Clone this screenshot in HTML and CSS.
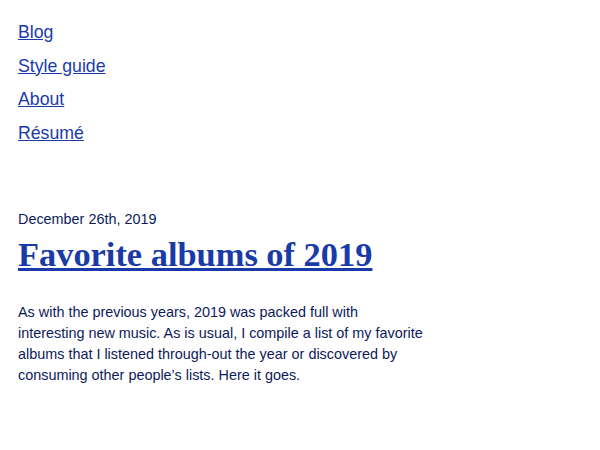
FILE: index.html
```html
<!DOCTYPE html>
<html>
<head>
<meta charset="utf-8">
<link rel="stylesheet" href="styles.css">
</head>
<body>
<nav class="nav">
  <a href="#">Blog</a>
  <a href="#">Style guide</a>
  <a href="#">About</a>
  <a href="#">Résumé</a>
</nav>
<main class="post">
  <div class="date">December 26th, 2019</div>
  <h1 class="title"><a href="#">Favorite albums of 2019</a></h1>
  <p class="intro">As with the previous years, 2019 was packed full with interesting new music. As is usual, I compile a list of my favorite albums that I listened through-out the year or discovered by consuming other people’s lists. Here it goes.</p>
</main>
</body>
</html>
```
FILE: styles.css
```css
html, body { margin: 0; padding: 0; background: #fff; }
body {
  font-family: "Liberation Sans", Arial, sans-serif;
  color: #0d1a5a;
  padding: 22px 18px;
}
.nav {
  display: flex;
  flex-direction: column;
  align-items: flex-start;
  gap: 12.5px;
}
.nav a {
  color: #1a3aa8;
  font-size: 17.7px;
  line-height: 21px;
}
.post { margin-top: 66px; }
.date { font-size: 14.4px; line-height: 18px; }
.title {
  margin: 6px 0 0;
  font-family: "Liberation Serif", "Times New Roman", serif;
  font-size: 34.4px;
  line-height: 40px;
  font-weight: bold;
}
.title a { color: #1a3aa8; }
.intro {
  margin: 28px 0 0;
  width: 406px;
  font-size: 14.4px;
  line-height: 21px;
}
```
